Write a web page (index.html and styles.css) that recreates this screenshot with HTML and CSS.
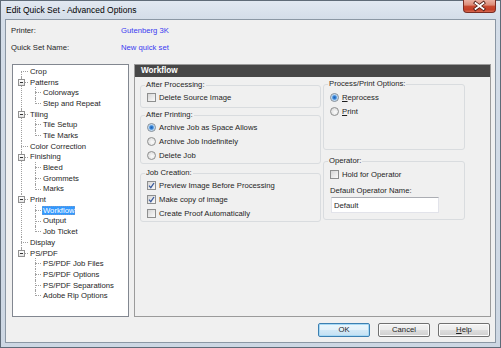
FILE: index.html
```html
<!DOCTYPE html>
<html>
<head>
<meta charset="utf-8">
<title>Edit Quick Set - Advanced Options</title>
<link rel="stylesheet" href="styles.css">
</head>
<body>
<div class="window">
  <div class="titlebar">
    <span class="title">Edit Quick Set - Advanced Options</span>
    <span class="close">
      <svg width="31" height="12" viewBox="0 0 31 12">
        <path d="M11.5 3 L19.5 9 M19.5 3 L11.5 9" stroke="#4a1810" stroke-width="3.4" stroke-linecap="square"/>
        <path d="M11.5 3 L19.5 9 M19.5 3 L11.5 9" stroke="#ffffff" stroke-width="1.8" stroke-linecap="square"/>
      </svg>
    </span>
  </div>
  <div class="client">
    <div class="info">
      <div class="info-row"><span class="info-label">Printer:</span><span class="info-value">Gutenberg 3K</span></div>
      <div class="info-row"><span class="info-label">Quick Set Name:</span><span class="info-value">New quick set</span></div>
    </div>
    <div class="main">
      <div class="tree-box">
        <ul class="tree">
          <li><div class="row"><span class="lbl">Crop</span></div></li>
          <li><div class="row"><span class="exp"></span><span class="lbl">Patterns</span></div>
            <ul class="sub">
              <li><div class="row"><span class="lbl">Colorways</span></div></li>
              <li><div class="row"><span class="lbl">Step and Repeat</span></div></li>
            </ul>
          </li>
          <li><div class="row"><span class="exp"></span><span class="lbl">Tiling</span></div>
            <ul class="sub">
              <li><div class="row"><span class="lbl">Tile Setup</span></div></li>
              <li><div class="row"><span class="lbl">Tile Marks</span></div></li>
            </ul>
          </li>
          <li><div class="row"><span class="lbl">Color Correction</span></div></li>
          <li><div class="row"><span class="exp"></span><span class="lbl">Finishing</span></div>
            <ul class="sub">
              <li><div class="row"><span class="lbl">Bleed</span></div></li>
              <li><div class="row"><span class="lbl">Grommets</span></div></li>
              <li><div class="row"><span class="lbl">Marks</span></div></li>
            </ul>
          </li>
          <li><div class="row"><span class="exp"></span><span class="lbl">Print</span></div>
            <ul class="sub">
              <li><div class="row"><span class="lbl sel">Workflow</span></div></li>
              <li><div class="row"><span class="lbl">Output</span></div></li>
              <li><div class="row"><span class="lbl">Job Ticket</span></div></li>
            </ul>
          </li>
          <li><div class="row"><span class="lbl">Display</span></div></li>
          <li><div class="row"><span class="exp"></span><span class="lbl">PS/PDF</span></div>
            <ul class="sub">
              <li><div class="row"><span class="lbl">PS/PDF Job Files</span></div></li>
              <li><div class="row"><span class="lbl">PS/PDF Options</span></div></li>
              <li><div class="row"><span class="lbl">PS/PDF Separations</span></div></li>
              <li><div class="row"><span class="lbl">Adobe Rip Options</span></div></li>
            </ul>
          </li>
        </ul>
      </div>
      <div class="panel">
        <div class="panel-header">Workflow</div>
        <div class="panel-body">
          <div class="col col-left">
            <fieldset class="group g1">
              <legend>After Processing:</legend>
              <div class="item"><span class="check"></span><span>Delete Source Image</span></div>
            </fieldset>
            <fieldset class="group g2">
              <legend>After Printing:</legend>
              <div class="item"><span class="radio on"></span><span>Archive Job as Space Allows</span></div>
              <div class="item"><span class="radio"></span><span>Archive Job Indefinitely</span></div>
              <div class="item"><span class="radio"></span><span>Delete Job</span></div>
            </fieldset>
            <fieldset class="group g3">
              <legend>Job Creation:</legend>
              <div class="item"><span class="check on"><svg width="7" height="7" viewBox="0 0 7 7"><path d="M1 3.6 L2.8 5.6 L6 1" fill="none" stroke="#3a5a9c" stroke-width="1.3"/></svg></span><span>Preview Image Before Processing</span></div>
              <div class="item"><span class="check on"><svg width="7" height="7" viewBox="0 0 7 7"><path d="M1 3.6 L2.8 5.6 L6 1" fill="none" stroke="#3a5a9c" stroke-width="1.3"/></svg></span><span>Make copy of image</span></div>
              <div class="item"><span class="check"></span><span>Create Proof Automatically</span></div>
            </fieldset>
          </div>
          <div class="col col-right">
            <fieldset class="group g4">
              <legend>Process/Print Options:</legend>
              <div class="item"><span class="radio on"></span><span><u>R</u>eprocess</span></div>
              <div class="item"><span class="radio"></span><span><u>P</u>rint</span></div>
            </fieldset>
            <fieldset class="group g5">
              <legend>Operator:</legend>
              <div class="item"><span class="check"></span><span>Hold for Operator</span></div>
              <div class="field-label">Default Operator Name:</div>
              <input class="text-input" type="text" value="Default" readonly>
            </fieldset>
          </div>
        </div>
      </div>
    </div>
    <div class="buttons">
      <span class="btn default">OK</span>
      <span class="btn">Cancel</span>
      <span class="btn"><u>H</u>elp</span>
    </div>
  </div>
</div>
</body>
</html>
```
FILE: styles.css
```css
* { box-sizing: border-box; }
html, body { margin: 0; padding: 0; }
body {
  width: 501px;
  height: 348px;
  overflow: hidden;
  font-family: "Liberation Sans", Arial, sans-serif;
  font-size: 7.7px;
  color: #1e1e1e;
  background: #ffffff;
}
.window {
  width: 501px;
  height: 348px;
  border: 1px solid #5f6b78;
  background: linear-gradient(180deg, #e1e8f1 0, #d4dde8 18px, #cdd7e3 100%);
  display: flex;
  flex-direction: column;
}
.titlebar {
  height: 18px;
  flex: none;
  display: flex;
  align-items: flex-start;
}
.title {
  font-size: 8.5px;
  line-height: 18px;
  padding-left: 5px;
  color: #000;
}
.close {
  margin-left: auto;
  margin-right: 4px;
  width: 33px;
  height: 13px;
  margin-top: -1px;
  border: 1px solid #7b2c22;
  border-top: none;
  border-radius: 0 0 4px 4px;
  background: linear-gradient(180deg, #eab0a2 0%, #dc8b77 42%, #c84a31 52%, #c43f27 80%, #d76a52 100%);
  display: flex;
  align-items: center;
  justify-content: center;
}
.close svg { display: block; }
.client {
  margin: 0 4px 4px;
  flex: 1;
  border: 1px solid #8b97a4;
  background: #f0f0f0;
  display: flex;
  flex-direction: column;
}
.info { padding: 2px 0 0 5px; }
.info-row { display: flex; align-items: center; height: 17px; }
.info-label { width: 110px; }
.info-value { color: #3a3af0; }

.main {
  display: flex;
  gap: 5px;
  margin: 8px 4px 0 6px;
  height: 253px;
}
.tree-box {
  width: 117px;
  flex: none;
  border: 1px solid #828790;
  background: #fff;
  padding-top: 1px;
  overflow: hidden;
}
.tree, .sub { list-style: none; margin: 0; padding: 0; }
.tree li { position: relative; }
.row {
  position: relative;
  height: 10.7px;
  display: flex;
  align-items: center;
  padding-left: 16px;
  white-space: nowrap;
}
.sub .row { padding-left: 29px; }
.row::before {
  content: "";
  position: absolute;
  left: 8px;
  width: 7px;
  top: 5px;
  border-top: 1px dotted #a0a0a0;
}
.sub .row::before { left: 22px; width: 6px; }
.tree > li::before,
.sub > li::before {
  content: "";
  position: absolute;
  left: 8px;
  top: 0;
  bottom: 0;
  border-left: 1px dotted #a0a0a0;
}
.sub > li::before { left: 22px; }
.tree > li:first-child::before { top: 5px; }
.tree > li:last-child::before,
.sub > li:last-child::before { bottom: auto; height: 6px; }
.exp {
  position: absolute;
  left: 5px;
  top: 2px;
  width: 7px;
  height: 7px;
  border: 1px solid #919191;
  background: linear-gradient(180deg, #ffffff, #e4e4e4);
  z-index: 1;
}
.exp::after {
  content: "";
  position: absolute;
  left: 1px;
  top: 2px;
  width: 3px;
  height: 1px;
  background: #333;
}
.lbl {
  padding: 0 1px;
  height: 9px;
  line-height: 9px;
}
.lbl.sel {
  background: #3399ff;
  color: #fff;
  outline: 1px dotted #6f9ad0;
  outline-offset: -1px;
}

.panel {
  width: 357px;
  flex: none;
  border: 1px solid #9b9b9b;
  display: flex;
  flex-direction: column;
}
.panel-header {
  height: 12px;
  background: #474747;
  color: #fff;
  font-weight: bold;
  font-size: 8.2px;
  line-height: 12px;
  padding-left: 6px;
}
.panel-body {
  display: flex;
  gap: 2px;
  padding-left: 5px;
}
.col { display: flex; flex-direction: column; }
.col-left { width: 181px; }
.col-right { width: 142px; }

.group {
  margin: 0;
  padding: 0 4px 1px 6px;
  border: 1px solid #d9dcdf;
  border-radius: 3px;
  min-width: 0;
}
.group legend {
  padding: 0 1px;
  margin-left: -2px;
  height: 10px;
  line-height: 10px;
}
.g1 { margin-top: 3px; padding-bottom: 3px; }
.g2 { margin-top: 2px; }
.g3 { margin-top: 4px; }
.g4 { margin-top: 2px; height: 71px; padding-top: 1px; }
.g5 { margin-top: 6px; padding-top: 1px; padding-bottom: 6px; }

.item {
  display: flex;
  align-items: center;
  height: 14px;
  gap: 3px;
}
.check {
  width: 9px;
  height: 9px;
  flex: none;
  border: 1px solid #8e8f8f;
  background: linear-gradient(135deg, #d6d6d6, #fafafa);
  display: flex;
  align-items: center;
  justify-content: center;
}
.check svg { display: block; }
.radio {
  width: 9px;
  height: 9px;
  flex: none;
  border: 1px solid #8e8f8f;
  border-radius: 50%;
  background: radial-gradient(circle at 60% 60%, #fbfbfb 0, #e4e4e4 60%, #d2d2d2 100%);
}
.radio.on {
  border-color: #7f8b97;
  background: radial-gradient(circle at 50% 50%, #1b5fb4 0, #3a85d6 1.6px, #9cc6ee 2.6px, #eaf3fb 3.6px, #e6e6e6 100%);
}
u { text-decoration: underline; }
.field-label {
  margin-top: 5px;
  height: 10px;
  line-height: 10px;
}
.text-input {
  display: block;
  margin: 1px 0 0 1px;
  width: 108px;
  height: 16px;
  padding: 0 0 0 2px;
  border: 1px solid #e2e3ea;
  border-top-color: #abadb3;
  background: #fff;
  font-family: inherit;
  font-size: 7.7px;
  color: #1e1e1e;
  outline: none;
}

.buttons {
  display: flex;
  justify-content: flex-end;
  gap: 8px;
  margin: 6px 5px 0 0;
}
.btn {
  width: 52px;
  height: 14px;
  line-height: 12px;
  text-align: center;
  border: 1px solid #707070;
  border-radius: 2px;
  background: linear-gradient(180deg, #f3f3f3 0%, #ebebeb 50%, #dddddd 52%, #cfcfcf 100%);
  box-shadow: inset 0 0 0 1px #fbfbfb;
  color: #1e1e1e;
}
.btn.default {
  border-color: #3c7fb1;
  background: linear-gradient(180deg, #eaf6fd 0%, #e3f1fa 50%, #d2e9f7 52%, #c4e0f3 100%);
  box-shadow: inset 0 0 0 1px #a7d9f5;
}
```
